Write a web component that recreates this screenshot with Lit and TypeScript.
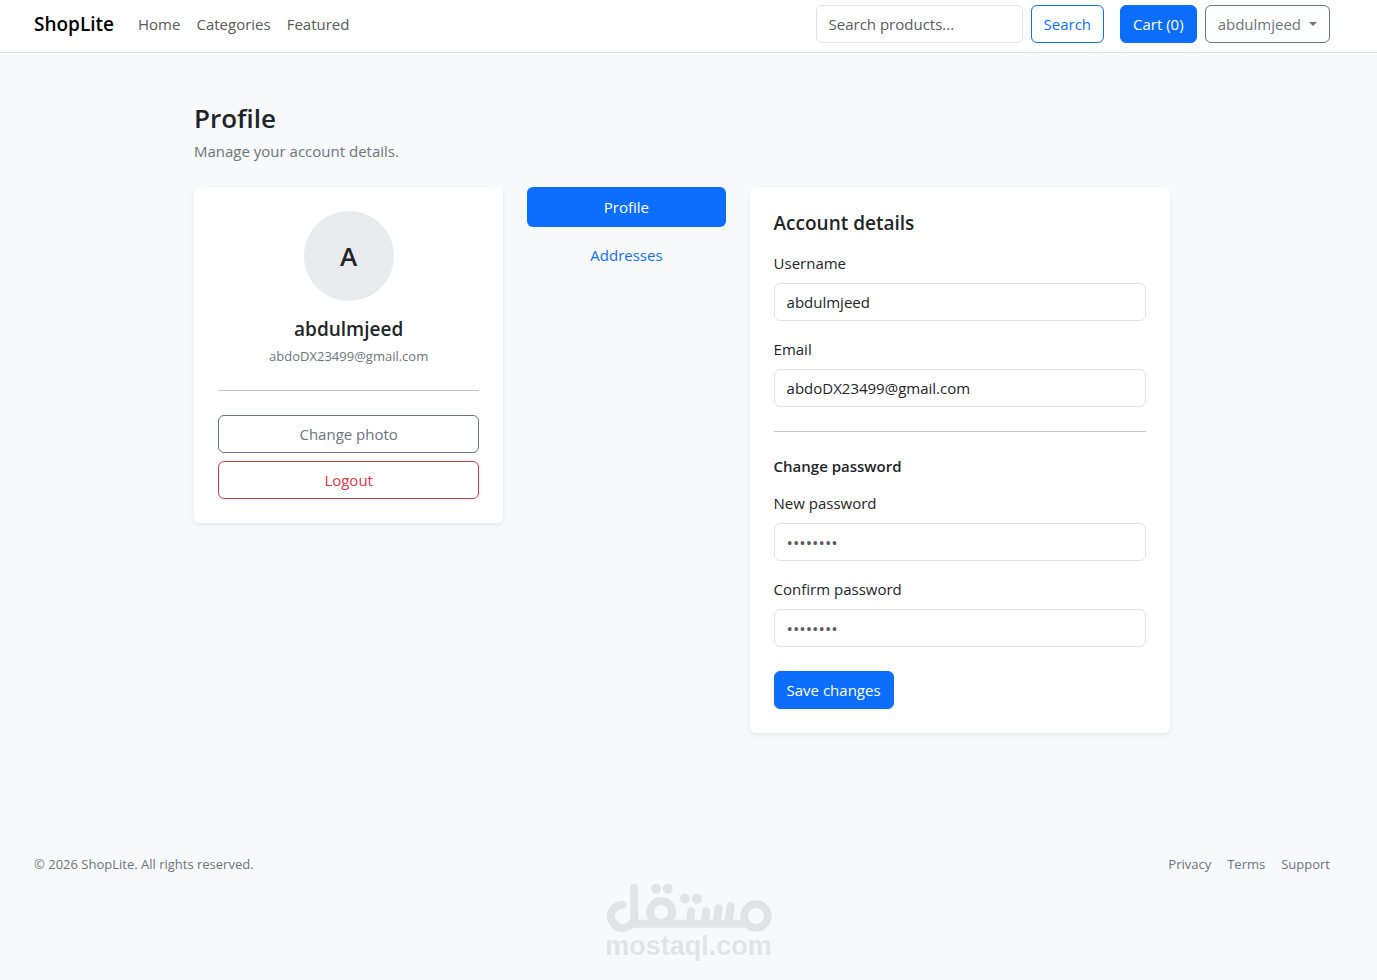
import { LitElement, html, css } from "lit";
import { customElement, state } from "lit/decorators.js";

@customElement("app-root")
export class AppRoot extends LitElement {
  @state() private username = "abdulmjeed";
  @state() private email = "abdoDX23499@gmail.com";

  static styles = css`
    :host {
      display: block;
      min-height: 100vh;
      background: #f8f9fa;
      color: #212529;
      font-family: "Segoe UI", "Open Sans", "Noto Sans", sans-serif;
      font-size: 15px;
      line-height: 24px;
    }
    * {
      box-sizing: border-box;
    }
    h1, h2, h3, p, hr, form {
      margin: 0;
    }
    a {
      color: inherit;
      text-decoration: none;
    }
    .topbar {
      background: #fff;
      border-bottom: 1px solid #dee2e6;
      padding: 5px 13px 9px 0;
    }
    .container {
      display: flex;
      align-items: center;
      max-width: 1320px;
      margin: 0 auto;
      padding: 0 12px;
    }
    .brand {
      font-size: 19px;
      font-weight: 600;
      color: #000;
      margin-right: 24px;
    }
    .links {
      display: flex;
      gap: 16px;
      margin-right: auto;
      color: #595959;
    }
    .search {
      display: flex;
      gap: 8px;
      margin-right: 16px;
    }
    .search .input {
      width: 207px;
    }
    .actions {
      display: flex;
      gap: 8px;
    }
    .input {
      display: block;
      width: 100%;
      height: 38px;
      padding: 6px 12px;
      border: 1px solid #dee2e6;
      border-radius: 6px;
      background: #fff;
      color: #212529;
      font: inherit;
    }
    .input::placeholder {
      color: #595c5f;
      opacity: 1;
    }
    .input[type="password"] {
      font-size: 17px;
    }
    .btn {
      display: inline-flex;
      align-items: center;
      justify-content: center;
      height: 38px;
      padding: 6px 12px;
      border: 1px solid currentColor;
      border-radius: 6px;
      background: transparent;
      font: inherit;
      white-space: nowrap;
      cursor: pointer;
    }
    .primary {
      background: #0d6efd;
      border-color: #0d6efd;
      color: #fff;
    }
    .outline-primary {
      color: #0d6efd;
    }
    .outline-secondary {
      color: #6c757d;
    }
    .outline-danger {
      color: #dc3545;
    }
    .caret {
      margin-left: 8px;
      border: 4px solid transparent;
      border-top-color: currentColor;
      border-bottom: 0;
    }
    .page {
      padding: 48px 13px 48px 0;
    }
    .content {
      max-width: 1000px;
      margin: 0 auto;
      padding: 0 12px;
    }
    .title {
      font-size: 26px;
      line-height: 34px;
      font-weight: 600;
      margin-bottom: 4px;
    }
    .subtitle {
      color: #6c757d;
      margin-bottom: 24px;
    }
    .grid {
      display: grid;
      grid-template-columns: repeat(9, minmax(0, 1fr));
      gap: 24px;
      align-items: start;
    }
    .card {
      background: #fff;
      border-radius: 6px;
      box-shadow: 0 2px 4px rgba(0, 0, 0, 0.075);
      padding: 24px;
      display: flex;
      flex-direction: column;
    }
    .person {
      grid-column: span 3;
      text-align: center;
    }
    .avatar {
      align-self: center;
      display: flex;
      align-items: center;
      justify-content: center;
      width: 90px;
      height: 90px;
      margin-bottom: 16px;
      border-radius: 50%;
      background: #e9ecef;
      font-size: 26px;
      font-weight: 600;
    }
    .heading {
      font-size: 19px;
      line-height: 25px;
      font-weight: 600;
    }
    .person .heading {
      margin-bottom: 4px;
    }
    .mail {
      font-size: 13px;
      line-height: 20px;
      color: #6c757d;
    }
    .rule {
      width: 100%;
      height: 1px;
      border: 0;
      margin: 24px 0;
      background: #c7c8c9;
    }
    .stack {
      display: flex;
      flex-direction: column;
      gap: 8px;
    }
    .tabs {
      grid-column: span 2;
    }
    .tab {
      padding: 8px 16px;
      border-radius: 6px;
      text-align: center;
      color: #0d6efd;
    }
    .tab.active {
      background: #0d6efd;
      color: #fff;
    }
    .details {
      grid-column: span 4;
    }
    .details .heading {
      margin-bottom: 15px;
    }
    .fields {
      display: grid;
      gap: 16px;
    }
    .label {
      display: block;
      margin-bottom: 8px;
    }
    .subheading {
      font-size: 15px;
      line-height: 20px;
      font-weight: 600;
      margin-bottom: 15px;
    }
    .save {
      align-self: flex-start;
      margin-top: 24px;
    }
    .footer {
      padding: 73px 13px 24px 0;
      font-size: 13px;
      line-height: 21px;
      color: #6c757d;
    }
    .footer .links {
      margin: 0 0 0 auto;
      color: inherit;
    }
    .watermark {
      position: fixed;
      left: 0;
      right: 0;
      bottom: 21px;
      display: flex;
      flex-direction: column;
      align-items: center;
      color: #e2e3e4;
      font: bold 27px/26px "Liberation Sans", Arial, sans-serif;
      pointer-events: none;
    }
    .mark {
      display: block;
      width: 166px;
      height: 50px;
    }
  `;

  private field(id: string, label: string, type: string, value: string, placeholder = "") {
    return html`<div>
      <label class="label" for=${id}>${label}</label>
      <input class="input" id=${id} type=${type} .value=${value} placeholder=${placeholder} />
    </div>`;
  }

  render() {
    const dots = "•".repeat(8);
    return html`
      <header class="topbar">
        <div class="container">
          <a class="brand" href="#">ShopLite</a>
          <nav class="links">
            <a href="#">Home</a>
            <a href="#">Categories</a>
            <a href="#">Featured</a>
          </nav>
          <form class="search" role="search">
            <input class="input" type="search" placeholder="Search products..." aria-label="Search products" />
            <button class="btn outline-primary" type="button">Search</button>
          </form>
          <div class="actions">
            <a class="btn primary" href="#">Cart (0)</a>
            <button class="btn outline-secondary" type="button" aria-haspopup="true">
              ${this.username}<span class="caret"></span>
            </button>
          </div>
        </div>
      </header>

      <main class="page">
        <div class="content">
          <h1 class="title">Profile</h1>
          <p class="subtitle">Manage your account details.</p>
          <div class="grid">
            <section class="card person">
              <div class="avatar">${this.username[0].toUpperCase()}</div>
              <h2 class="heading">${this.username}</h2>
              <p class="mail">${this.email}</p>
              <hr class="rule" />
              <div class="stack">
                <button class="btn outline-secondary" type="button">Change photo</button>
                <button class="btn outline-danger" type="button">Logout</button>
              </div>
            </section>

            <nav class="stack tabs">
              <a class="tab active" href="#" aria-current="page">Profile</a>
              <a class="tab" href="#">Addresses</a>
            </nav>

            <form class="card details">
              <h2 class="heading">Account details</h2>
              <div class="fields">
                ${this.field("username", "Username", "text", this.username)}
                ${this.field("email", "Email", "email", this.email)}
              </div>
              <hr class="rule" />
              <h3 class="subheading">Change password</h3>
              <div class="fields">
                ${this.field("password", "New password", "password", "", dots)}
                ${this.field("confirm", "Confirm password", "password", "", dots)}
              </div>
              <button class="btn primary save" type="button">Save changes</button>
            </form>
          </div>
        </div>
      </main>

      <footer class="footer">
        <div class="container">
          <span>© 2026 ShopLite. All rights reserved.</span>
          <nav class="links">
            <a href="#">Privacy</a>
            <a href="#">Terms</a>
            <a href="#">Support</a>
          </nav>
        </div>
      </footer>

      <div class="watermark">
        <svg class="mark" viewBox="46 40 498 150" fill="none" stroke="currentColor" stroke-width="24" stroke-linecap="round" aria-hidden="true">
          <path d="M95 105 A35 35 0 1 0 131 140 V54" />
          <path d="M100 174 H495 V150 H125 Z" fill="currentColor" stroke="none" />
          <circle cx="212" cy="127" r="33" />
          <circle cx="496" cy="139" r="35" />
          <path d="M302 125 L299 158 M347 125 L342 158 M384 116 L378 158 M420 110 L413 158" />
          <circle cx="496" cy="139" r="23" fill="#f8f9fa" stroke="none" />
          <g fill="currentColor" stroke="none">
            <circle cx="196" cy="57" r="15" />
            <circle cx="231" cy="57" r="15" />
            <circle cx="283" cy="87" r="15" />
            <circle cx="319" cy="87" r="15" />
          </g>
        </svg>
        <span>mostaql.com</span>
      </div>
    `;
  }
}
